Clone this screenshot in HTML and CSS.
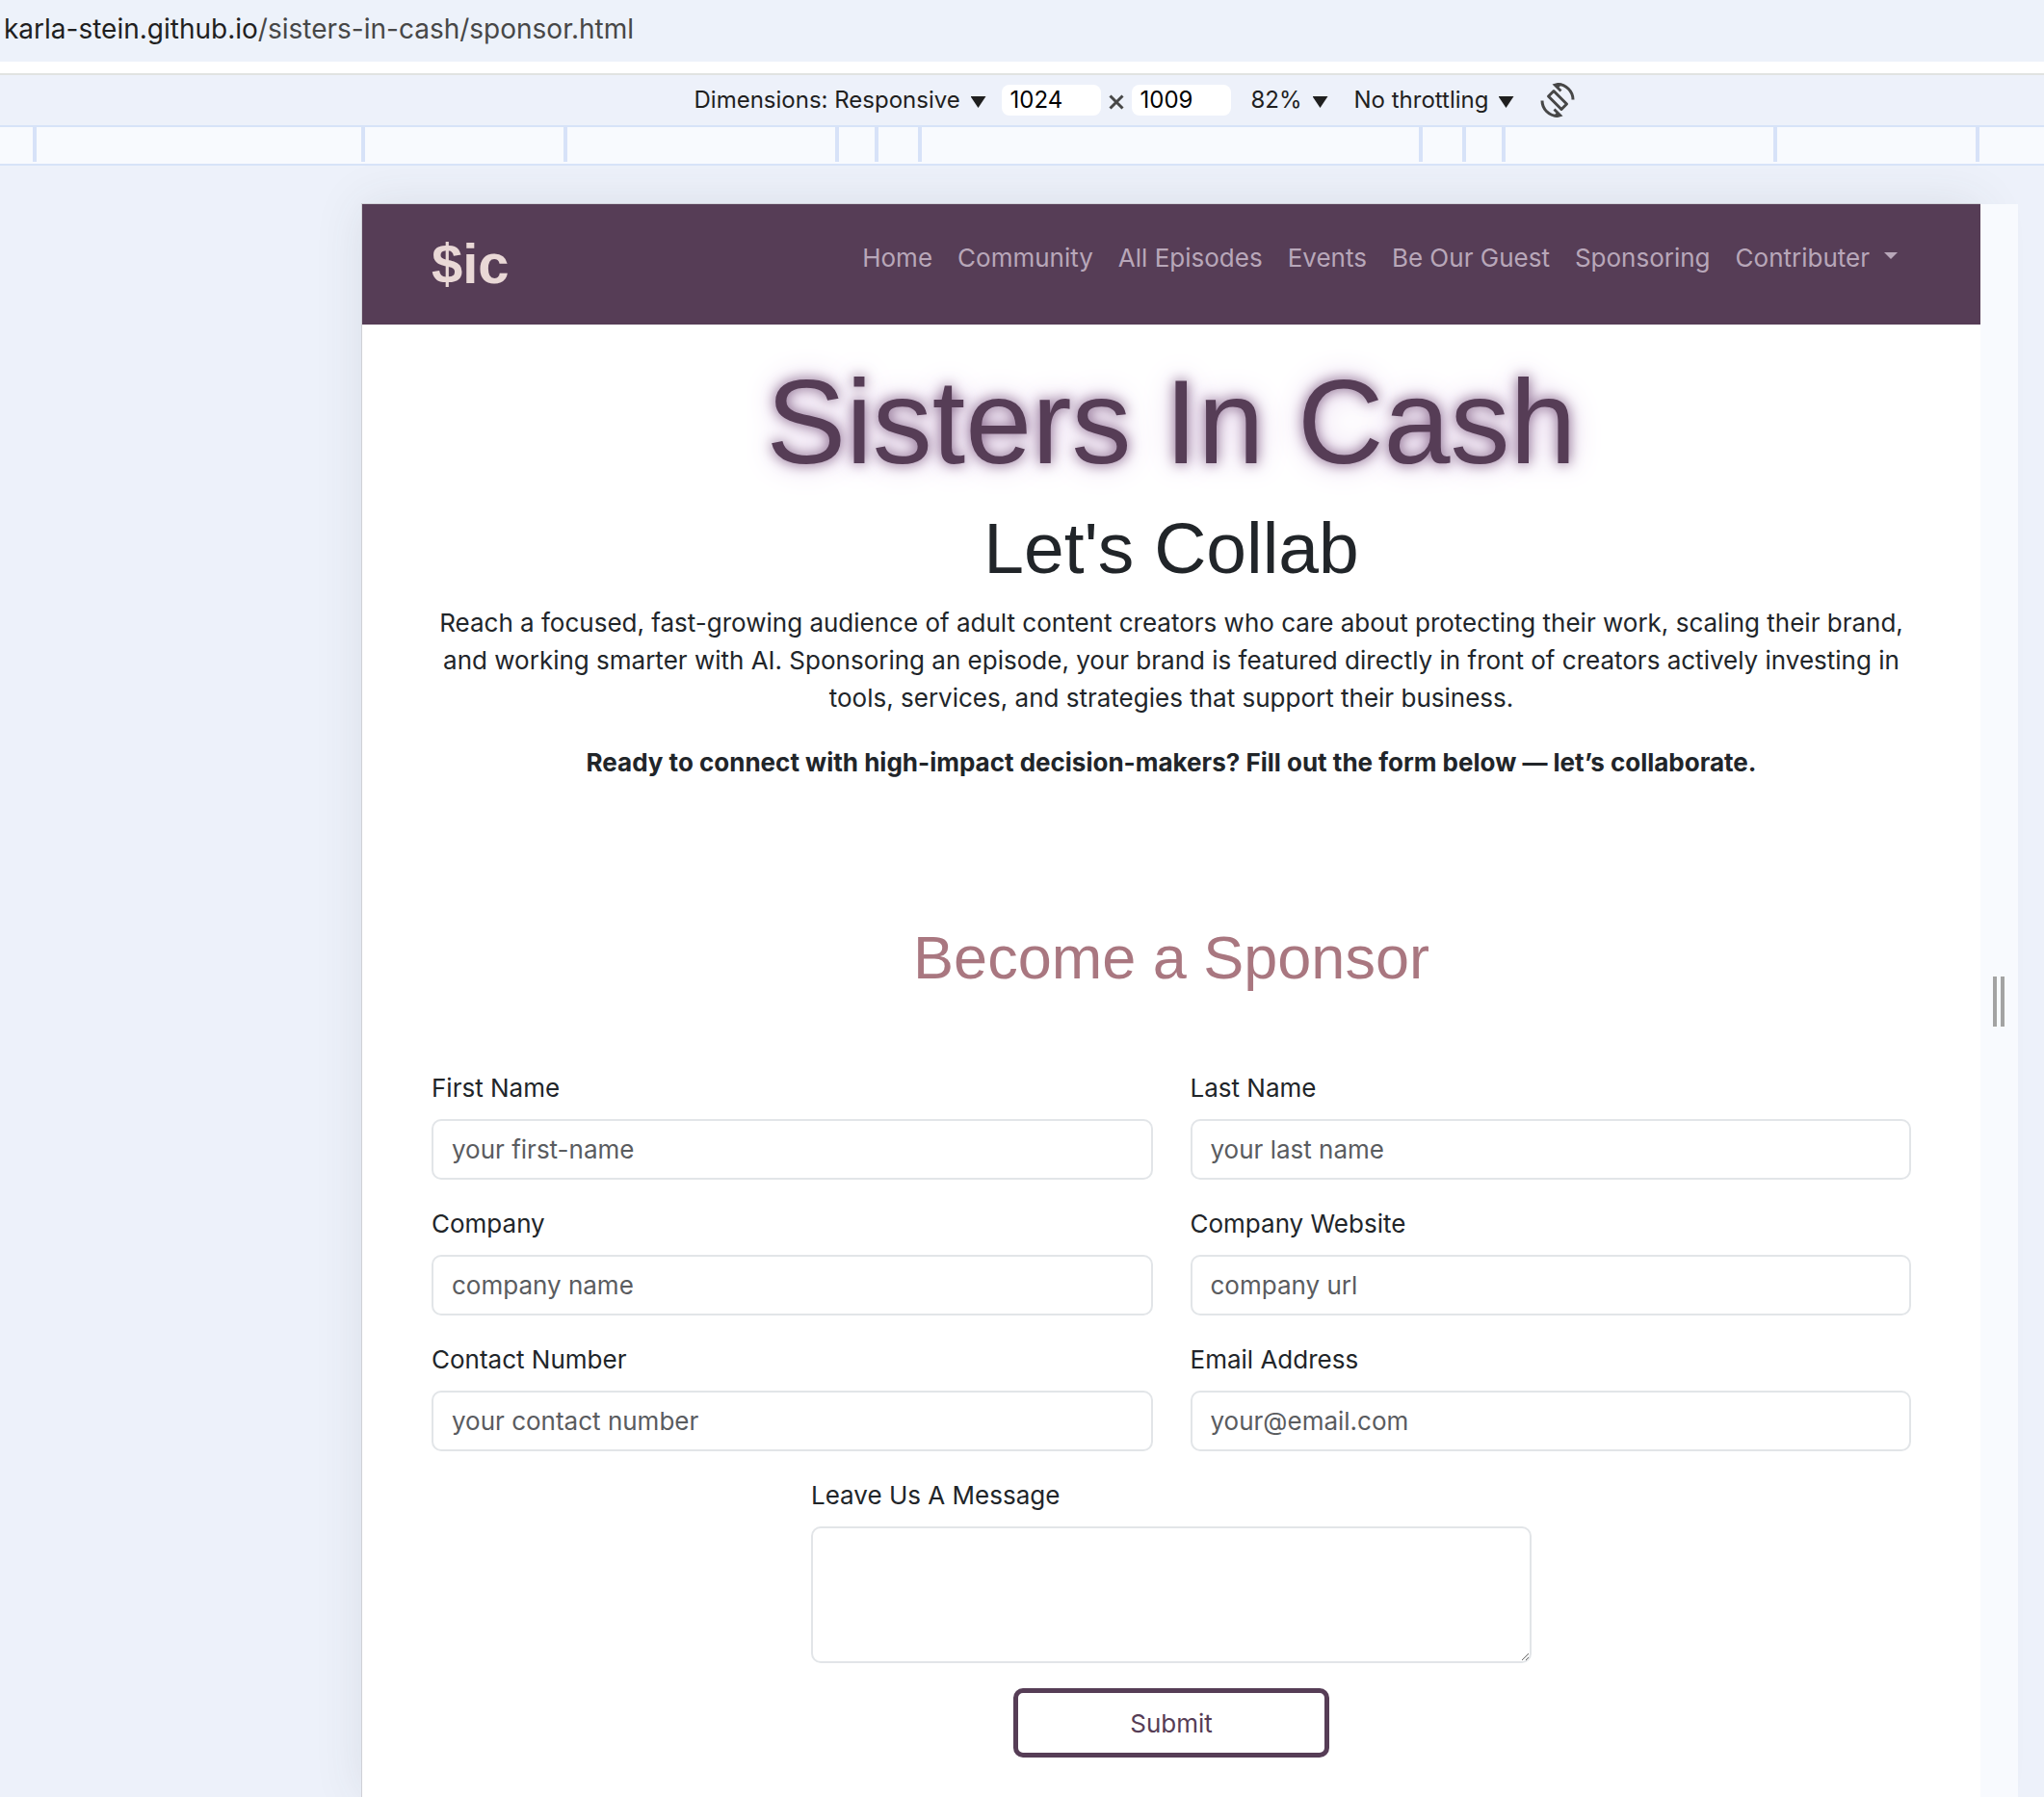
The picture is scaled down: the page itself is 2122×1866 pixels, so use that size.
FILE: index.html
```html
<!DOCTYPE html>
<html lang="en">
<head>
<meta charset="utf-8">
<title>Sisters In Cash - Sponsor</title>
<link rel="stylesheet" href="styles.css">
</head>
<body>
<div class="urlbar"><a class="url" href="#">karla-stein.github.io<span class="url-path">/sisters-in-cash/sponsor.html</span></a></div>
<div class="toolbar">
  <span class="picker picker-device"><select aria-label="Device"><option>Dimensions: Responsive</option></select></span>
  <span class="size">
    <input class="size-input" type="text" aria-label="Width" value="1024">
    <svg class="times" viewBox="0 0 16 16" aria-hidden="true"><path d="M1.500 1.500 14.500 14.500M14.500 1.500 1.500 14.500"/></svg>
    <input class="size-input" type="text" aria-label="Height" value="1009">
  </span>
  <span class="picker"><select aria-label="Zoom"><option>82%</option></select></span>
  <span class="picker"><select aria-label="Throttling"><option>No throttling</option></select></span>
  <button class="rotate" type="button" aria-label="Rotate">
    <svg viewBox="0 0 36 36" aria-hidden="true">
      <path class="line" d="M2 18.500A16 16 0 0 0 18 34.500M34 17.500A16 16 0 0 0 18 1.500"/>
      <path class="line" stroke-linejoin="round" d="M14 8.500 27.500 22 22 27.500 8.500 14z"/>
      <path class="solid" d="M12.500 1.500 18 0 23 1 19.500 4.500 22.500 7.500 20.500 9.500zM23.500 34.500 18 36 13 35 16.500 31.500 13.500 28.500 15.500 26.500z"/>
    </svg>
  </button>
</div>
<div class="ruler">
  <i class="gap-edge"></i><i class="tick gap-xl"></i><i class="tick gap-m"></i><i class="tick gap-l"></i><i class="tick gap-xs"></i><i class="tick gap-s"></i><i class="tick gap-center"></i><i class="tick gap-s"></i><i class="tick gap-xs"></i><i class="tick gap-l"></i><i class="tick gap-m"></i><i class="tick gap-end"></i>
</div>
<div class="stage">
  <div class="device">
    <header class="navbar">
      <a class="brand" href="#">$ic</a>
      <nav class="links">
        <a href="#">Home</a><a href="#">Community</a><a href="#">All Episodes</a><a href="#">Events</a><a href="#">Be Our Guest</a><a href="#">Sponsoring</a><a class="dropdown" href="#">Contributer</a>
      </nav>
    </header>
    <main class="content">
      <h1>Sisters In Cash</h1>
      <h2>Let's Collab</h2>
      <p>Reach a focused, fast-growing audience of adult content creators who care about protecting their work, scaling their brand, and working smarter with AI. Sponsoring an episode, your brand is featured directly in front of creators actively investing in tools, services, and strategies that support their business.</p>
      <p><strong>Ready to connect with high-impact decision-makers? Fill out the form below — let’s collaborate.</strong></p>
      <h3>Become a Sponsor</h3>
      <form class="form">
        <div class="field"><label for="first">First Name</label><input id="first" type="text" placeholder="your first-name"></div>
        <div class="field"><label for="last">Last Name</label><input id="last" type="text" placeholder="your last name"></div>
        <div class="field"><label for="company">Company</label><input id="company" type="text" placeholder="company name"></div>
        <div class="field"><label for="site">Company Website</label><input id="site" type="url" placeholder="company url"></div>
        <div class="field"><label for="phone">Contact Number</label><input id="phone" type="tel" placeholder="your contact number"></div>
        <div class="field"><label for="email">Email Address</label><input id="email" type="email" placeholder="your@email.com"></div>
        <div class="field message"><label for="message">Leave Us A Message</label><textarea id="message"></textarea></div>
        <button class="submit" type="submit">Submit</button>
      </form>
    </main>
  </div>
  <div class="resizer"><span class="grip"></span></div>
</div>
</body>
</html>
```
FILE: styles.css
```css
* { box-sizing: border-box; }

body {
  margin: 0;
  min-height: 100vh;
  display: flex;
  flex-direction: column;
  background: #edf1fa;
  color: #212529;
  font-family: Inter, "Liberation Sans", sans-serif;
  font-size: 26px;
  line-height: 39px;
}

a { color: inherit; text-decoration: none; }
input, select, textarea, button { font: inherit; color: inherit; }

/* Browser chrome */
.urlbar {
  height: 64px;
  padding: 11px 4px;
  background: #edf2fa;
  color: #1f1f1f;
  font-size: 28px;
}
.url-path { color: #474747; }

.toolbar {
  height: 56px;
  margin-top: 12px;
  padding: 0 4px 0 237px;
  display: flex;
  align-items: center;
  justify-content: center;
  border-top: 2px solid #e1e3e1;
  border-bottom: 2px solid #d7e3f8;
  background: #edf1fa;
  box-shadow: 0 -12px #fff;
  color: #1f1f1f;
  font-size: 24px;
  line-height: 32px;
}
.picker {
  display: flex;
  align-items: center;
  gap: 10px;
  margin-right: 27px;
}
.picker-device { margin-right: 16px; }
.picker select {
  appearance: none;
  padding: 0;
  border: 0;
  background: none;
}
.picker::after {
  content: "";
  width: 16px;
  height: 12px;
  margin-top: 4px;
  background: #1f1f1f;
  clip-path: polygon(0 0, 100% 0, 50% 100%);
}
.size {
  display: flex;
  align-items: center;
  gap: 8px;
  margin-right: 21px;
}
.size-input {
  width: 103px;
  height: 32px;
  padding: 0 9px;
  border: 0;
  border-radius: 8px;
  background: #fff;
  color: #000;
}
.times {
  width: 16px;
  height: 16px;
  margin-top: 4px;
  fill: none;
  stroke: #474747;
  stroke-width: 3;
}
.rotate {
  width: 36px;
  height: 36px;
  padding: 0;
  border: 0;
  background: none;
}
.rotate svg { display: block; }
.rotate .line { fill: none; stroke: #474747; stroke-width: 3; }
.rotate .solid { fill: #474747; }

.ruler {
  height: 40px;
  padding-bottom: 2px;
  display: flex;
  border-bottom: 2px solid #d7e3f8;
  background: #f8fafe;
}
.ruler i { flex: none; }
.tick { border-left: 4px solid #d7e2f8; }
.gap-edge { width: 34px; }
.gap-xl { width: 341px; }
.gap-m { width: 210px; }
.gap-l { width: 282px; }
.gap-xs { width: 41px; }
.gap-s { width: 45px; }
.ruler .gap-center { flex: 1; }
.gap-end { width: 71px; }

.stage {
  flex: 1;
  display: flex;
  padding: 40px 27px 0 375px;
  overflow: hidden;
}
.device {
  flex: 1;
  margin: -1px 0 0;
  border: 1px solid #cfd0d6;
  border-width: 1px 0 0 1px;
  background: #fff;
  box-shadow: 0 0 48px rgba(60, 64, 67, 0.1);
}
.resizer {
  width: 39px;
  position: relative;
  background: #f8fafe;
}
.grip {
  position: absolute;
  top: 802px;
  left: 13px;
  width: 12px;
  height: 52px;
  border: solid #a3a3a3;
  border-width: 0 4px;
}

/* Site */
.navbar {
  height: 125px;
  padding: 26px 86px 0 72px;
  display: flex;
  align-items: flex-start;
  justify-content: space-between;
  background: #563d56;
}
.brand {
  color: #e9d8d6;
  font: bold 58px/72px "Liberation Sans", Arial, sans-serif;
}
.links {
  display: flex;
  gap: 26px;
  padding-top: 10px;
  color: #b8a7b9;
}
.dropdown {
  display: flex;
  align-items: center;
  gap: 15px;
}
.dropdown::after {
  content: "";
  width: 14px;
  height: 7px;
  margin-top: -4px;
  background: currentColor;
  clip-path: polygon(0 0, 100% 0, 50% 100%);
}

.content {
  padding: 32px 72px 40px;
  text-align: center;
}
h1, h2, h3, p { margin: 0; }
h1, h2, h3 {
  font-family: "Liberation Sans", Arial, sans-serif;
  font-weight: 400;
}
h1 {
  margin-bottom: 20px;
  color: #563d56;
  font-size: 124px;
  line-height: 138px;
  text-shadow: 0 0 14px #7d5c80, 0 0 32px #d9bde2;
}
h2 {
  margin-bottom: 16px;
  font-size: 75px;
  line-height: 84px;
}
p { margin-bottom: 28px; }
h3 {
  margin: 147px 0 80px;
  color: #a97780;
  font-size: 63px;
  line-height: 72px;
}

.form {
  display: grid;
  grid-template-columns: 1fr 1fr;
  gap: 26px 39px;
  text-align: left;
}
.field {
  display: flex;
  flex-direction: column;
  gap: 13px;
}
.field input, .field textarea {
  width: 100%;
  height: 63px;
  padding: 0 19px;
  border: 2px solid #e2e5e8;
  border-radius: 10px;
  background: #fff;
}
.field textarea { height: 142px; }
.field ::placeholder { color: #5a5c5f; opacity: 1; }
.message, .submit {
  grid-column: 1 / -1;
  justify-self: center;
}
.message { width: calc(50% - 20px); }
.submit {
  width: 328px;
  height: 72px;
  border: 5px solid #563d56;
  border-radius: 10px;
  background: #fff;
  color: #563d56;
}
```
